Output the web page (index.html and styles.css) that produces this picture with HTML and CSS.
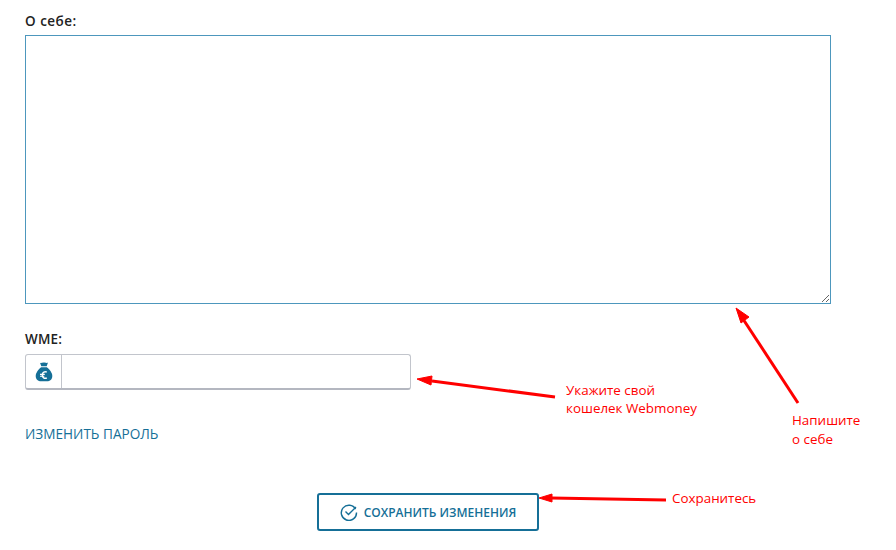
FILE: index.html
```html
<!DOCTYPE html>
<html lang="ru">
<head>
	<meta charset="UTF-8">
	<title>О себе</title>
	<link rel="stylesheet" href="styles.css">
</head>
<body>
	<form class="profile">
		<label class="field_label" for="about">О себе:</label>
		<textarea class="about" id="about"></textarea>

		<label class="field_label wme_label" for="wme">WME:</label>
		<div class="wallet">
			<span class="wallet_icon">
				<svg width="18" height="20" viewBox="0 0 18 20">
					<path fill="#156f97" d="M5 .8c1.200.7 2.600-.5 4-.1 1.400-.4 2.800.8 4-.1L11.700 4.300H6.300z"/>
					<path fill="#156f97" d="M6.200 5.200h5.600C14.600 7.300 17.300 10.800 17.300 14c0 3.600-2.500 5.300-5.300 5.300H6C3.200 19.300.700 17.600.700 14c0-3.200 2.700-6.700 5.500-8.800z"/>
					<path fill="none" stroke="#fff" stroke-width="1.500" d="M11.800 10.200c-2-1.100-4.300-.1-4.500 2.600-.2 2.900 2.300 4.200 4.500 3"/>
					<path fill="none" stroke="#fff" stroke-width="1.100" d="M5 12.400h4.800M5 14.200h4.300"/>
				</svg>
			</span>
			<input class="wallet_input" id="wme" type="text">
		</div>

		<a class="change_pass" href="#">Изменить пароль</a>

		<div class="actions">
			<button class="save" type="button">
				<svg width="18" height="18" viewBox="0 0 18 18" fill="none" stroke="#156f97" stroke-width="1.400">
					<path d="M15.600 6.200A7.600 7.600 0 1 0 16.500 9.500"/>
					<path d="M5.500 8.500l3 3 7.500-7.500"/>
				</svg>
				Сохранить изменения
			</button>
		</div>
	</form>

	<!-- пометки поверх скриншота -->
	<svg class="marks" width="896" height="550" viewBox="0 0 896 550">
		<g fill="#ff0000" stroke="#ff0000">
			<path fill="none" stroke-width="3" d="M798 403L743 319"/>
			<path stroke-width="1" d="M736 308L749 317L741 323z"/>
			<path fill="none" stroke-width="3" d="M555 397L432 381"/>
			<path stroke-width="1" d="M417 379L432 376L431 385z"/>
			<path fill="none" stroke-width="3" d="M666 500L551 498"/>
			<path stroke-width="1" d="M539 498L552 494L552 502z"/>
		</g>
	</svg>
	<div class="note note_wallet">Укажите свой<br>кошелек Webmoney</div>
	<div class="note note_about">Напишите<br>о себе</div>
	<div class="note note_save">Сохранитесь</div>
</body>
</html>
```

FILE: styles.css
```css
html,body{
	margin:0;
	padding:0;
	height:100%;
	background:#fff;
	overflow:hidden;
}
body{
	position:relative;
	font-family:"Open Sans","Noto Sans",sans-serif;
	color:#222;
}
.profile{
	display:flex;
	flex-direction:column;
	align-items:flex-start;
	width:806px;
	padding:13px 0 0 25px;
}
.field_label{
	font-size:13.500px;
	letter-spacing:.5px;
	line-height:16px;
	font-weight:600;
	margin-bottom:6px;
}
.about{
	display:block;
	box-sizing:border-box;
	width:806px;
	height:269px;
	margin:0;
	border:1px solid #4d97bd;
	background:#fff;
	outline:none;
}
.wme_label{
	margin-top:27px;
	margin-bottom:7px;
	letter-spacing:.2px;
}
.wallet{
	display:flex;
	box-sizing:border-box;
	width:386px;
	height:36px;
	border:1px solid #c2c5cc;
	border-bottom:2px solid #b4b7c0;
	border-radius:3px;
}
.wallet_icon{
	display:flex;
	align-items:center;
	justify-content:center;
	width:35px;
	border-right:1px solid #c2c5cc;
}
.wallet_input{
	flex:1;
	min-width:0;
	border:0;
	outline:none;
	background:transparent;
}
.change_pass{
	margin-top:35px;
	font-size:13.600px;
	line-height:18px;
	color:#156f97;
	text-transform:uppercase;
	text-decoration:none;
}
.actions{
	display:flex;
	justify-content:center;
	width:806px;
	margin-top:50px;
}
.save{
	display:flex;
	align-items:center;
	justify-content:center;
	gap:6px;
	box-sizing:border-box;
	width:222px;
	height:38px;
	padding:0;
	border:2px solid #156f97;
	border-radius:3px;
	background:#fff;
	font-family:"Open Sans","Noto Sans",sans-serif;
	font-size:12px;
	font-weight:600;
	color:#156f97;
	text-transform:uppercase;
}
.marks{
	position:absolute;
	top:0;
	left:0;
}
.note{
	position:absolute;
	font-family:"Open Sans","Noto Sans",sans-serif;
	font-size:13.400px;
	line-height:18px;
	color:#ff0000;
}
.note_wallet{
	left:566px;
	top:381px;
}
.note_about{
	left:792px;
	top:411px;
	line-height:19px;
}
.note_save{
	left:672px;
	top:489px;
}
```
